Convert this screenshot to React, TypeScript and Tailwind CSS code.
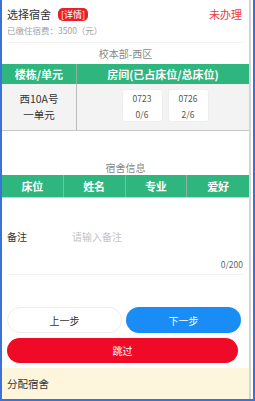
import React from "react";

export default function App() {
  const font = { fontFamily: '"Noto Sans CJK SC", "Noto Sans", sans-serif' };
  return (
    <div
      className="w-[255px] h-[401px] bg-white border-l-2 border-r-2 border-b-2 border-[#3a72d8] flex overflow-hidden"
      style={font}
    >
      <div className="w-[247px] flex flex-col">
        {/* header */}
        <div className="px-[5px] pt-[6px]">
          <div className="flex items-center justify-between h-[16px]">
            <div className="flex items-center">
              <span className="text-[11px] text-[#333] leading-none">选择宿舍</span>
              <span className="ml-[7px] bg-[#e8202a] text-white text-[9px] leading-none px-[3px] py-[2px] rounded-[5px]">[详情]</span>
            </div>
            <span className="text-[11px] text-[#f03a3a] leading-none mr-[2px]">未办理</span>
          </div>
          <div className="text-[8.5px] text-[#a3a3a3] mt-[2px] leading-[12px]">已缴住宿费：3500（元）</div>
          <div className="h-px bg-[#f3f3f3] mt-[6px]" />
        </div>
        <div className="text-center text-[10px] text-[#888] leading-[20px] mt-[1px]">校本部-西区</div>
        {/* table 1 */}
        <div className="flex h-[20px] bg-[#2fb67f] text-white text-[11px] font-bold items-stretch">
          <div className="w-[75px] flex items-center justify-center border-r border-[#8ab59e]">楼栋/单元</div>
          <div className="flex-1 flex items-center justify-center">房间(已占床位/总床位)</div>
        </div>
        <div className="flex h-[47px] bg-[#f3f3f3] border-b border-[#c8c8c8]">
          <div className="w-[75px] flex flex-col items-center justify-center border-r border-[#bcbcbc] text-[10.5px] text-[#333] leading-[16px]">
            <span>西10A号</span>
            <span>一单元</span>
          </div>
          <div className="flex-1 flex justify-center gap-[5px] pt-[5px] pl-[4px]">
            {[
              ["0723", "0/6"],
              ["0726", "2/6"],
            ].map(([a, b]) => (
              <div key={a} className="w-[41px] h-[33px] bg-white rounded-[3px] border border-[#eeeeee] flex flex-col items-center justify-center text-[8.5px] text-[#555] leading-[16px]">
                <span>{a}</span>
                <span>{b}</span>
              </div>
            ))}
          </div>
        </div>
        <div className="h-[28px]" />
        <div className="text-center text-[10px] text-[#888] leading-[14px] pt-[2px]">宿舍信息</div>
        {/* table 2 */}
        <div className="grid grid-cols-4 h-[23px] bg-[#2fb67f] text-white text-[11px] font-bold border-b border-[#cfcfcf]">
          <div className="flex items-center justify-center border-r border-[#8ab59e]">床位</div>
          <div className="flex items-center justify-center border-r border-[#8ab59e]">姓名</div>
          <div className="flex items-center justify-center border-r border-[#8ab59e]">专业</div>
          <div className="flex items-center justify-center">爱好</div>
        </div>
        {/* remark */}
        <div className="px-[5px] pt-[32px]">
          <div className="flex text-[10px] leading-[14px]">
            <span className="w-[65px] text-[#333]">备注</span>
            <span className="text-[#c4c4c4]">请输入备注</span>
          </div>
          <div className="text-right text-[8.5px] text-[#666] mt-[14px] mr-[1px] leading-[12px]">0/200</div>
          <div className="h-px bg-[#f3f3f3] mt-[4px]" />
        </div>
        {/* buttons */}
        <div className="px-[5px] pt-[32px] flex gap-[4px]">
          <div className="w-[115px] h-[26px] rounded-full border border-[#eeeeee] bg-white flex items-center justify-center text-[10px] text-[#333]">上一步</div>
          <div className="w-[115px] h-[26px] rounded-full bg-[#1a8cf6] flex items-center justify-center text-[10px] text-white">下一步</div>
        </div>
        <div className="px-[5px] pt-[5px]">
          <div className="w-[231px] h-[25px] rounded-full bg-[#ef0a27] flex items-center justify-center text-[10px] text-white">跳过</div>
        </div>
        <div className="flex-1 bg-[#fdf6dc] mt-[5px] px-[5px] flex items-center">
          <span className="text-[10.5px] text-[#333]">分配宿舍</span>
        </div>
      </div>
      <div className="w-[2px] bg-[#d4d4d4]" />
      <div className="flex-1 bg-white" />
    </div>
  );
}
